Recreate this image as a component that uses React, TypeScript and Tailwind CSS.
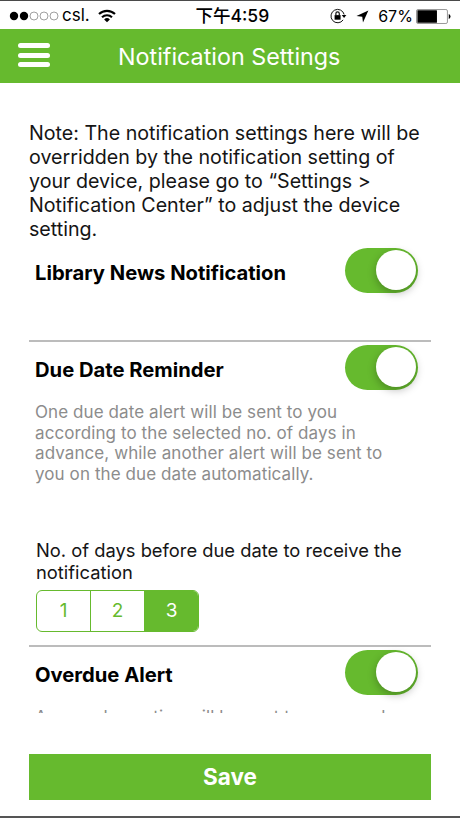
import { useState } from "react";

const NOTE = [
  "Note: The notification settings here will be",
  "overridden by the notification setting of",
  "your device, please go to “Settings >",
  "Notification Center” to adjust the device",
  "setting.",
];

const DUE_TEXT = [
  "One due date alert will be sent to you",
  "according to the selected no. of days in",
  "advance, while another alert will be sent to",
  "you on the due date automatically.",
];

function Lines({ lines }: { lines: string[] }) {
  return (
    <>
      {lines.map((line) => (
        <span key={line} className="block whitespace-nowrap">
          {line}
        </span>
      ))}
    </>
  );
}

function Toggle() {
  const [on, setOn] = useState(true);
  return (
    <button
      role="switch"
      aria-checked={on}
      onClick={() => setOn(!on)}
      className={`flex h-[45px] w-[73px] shrink-0 items-center rounded-full px-[2px] pb-px ${
        on ? "justify-end bg-[#66ba2e]" : "justify-start bg-gray-300"
      }`}
    >
      <span className="size-[40px] rounded-full bg-white shadow-[0_3px_8px_rgba(0,0,0,0.27)]" />
    </button>
  );
}

function SettingRow({ title }: { title: string }) {
  return (
    <div className="flex h-[45px] items-center justify-between pr-[13px] pl-[6px]">
      <h2 className="pt-[5px] text-[20.2px] leading-6 font-bold whitespace-nowrap text-black">{title}</h2>
      <Toggle />
    </div>
  );
}

function StatusBar() {
  return (
    <div className="flex h-[29px] shrink-0 items-center border-t border-[#4a4a4a] bg-white px-[9px] pt-[2px] text-[17px] text-black">
      <div className="flex w-[187px] items-center">
        <svg width="50" height="10" viewBox="0 0 50 10">
          <circle cx="5" cy="5" r="4.2" />
          <circle cx="15" cy="5" r="4.2" />
          <g fill="none" stroke="#777" strokeWidth="0.7">
            <circle cx="25" cy="5" r="4" />
            <circle cx="35" cy="5" r="4" />
            <circle cx="45" cy="5" r="4" />
          </g>
        </svg>
        <span className="ml-[3px] w-[36px]">csl.</span>
        <svg width="18" height="14" viewBox="0 0 18 14" fill="none" stroke="#000" strokeWidth="2.1">
          <path d="M1 5.1a11.5 11.5 0 0 1 16 0" />
          <path d="M4 8.3a7.2 7.2 0 0 1 10 0" />
          <path d="M9 13.2 6.1 10.4a4.2 4.2 0 0 1 5.8 0Z" fill="#000" stroke="none" />
        </svg>
      </div>
      <div className="w-[135px] text-[17.5px] font-medium whitespace-nowrap">下午4:59</div>
      <svg width="17" height="16" viewBox="0 0 17 16" fill="none" stroke="#111" strokeWidth="1">
        <path d="M13.2 11.9A6.7 6.7 0 1 1 14.2 6.5" />
        <path d="M11.8 6.9h4.6l-2.3 3Z" fill="#000" stroke="none" />
        <path d="M4.6 7.1h6v4.6h-6Z" fill="#000" stroke="none" />
        <path d="M5.9 7.2V5.5a1.7 1.7 0 0 1 3.4 0v1.7" strokeWidth="1.2" />
      </svg>
      <svg className="ml-[9px]" width="13" height="13" viewBox="0 0 13 13">
        <path d="M12.4.5 7 12.6 6.3 6.7.5 6Z" />
      </svg>
      <span className="ml-[9px] w-[38px] text-[16px] whitespace-nowrap">67%</span>
      <svg width="35" height="15" viewBox="0 0 35 15">
        <rect x=".5" y=".5" width="31" height="14" rx="1.5" fill="none" stroke="#999" />
        <rect x="1.4" y="1.3" width="19.6" height="12.4" rx=".5" />
        <path d="M32.8 5v5q1.8-.7 1.8-2.5T32.8 5Z" />
      </svg>
    </div>
  );
}

export default function App() {
  const [days, setDays] = useState(3);
  return (
    <div className="flex h-[818px] w-[460px] flex-col overflow-hidden border-b-2 border-[#555] bg-white font-['Inter','Noto_Sans_CJK_TC',sans-serif]">
      <StatusBar />
      <header className="flex h-[54px] shrink-0 items-center bg-[#66ba2e] pl-[18px] text-white">
        <button aria-label="Menu" className="flex w-[32px] flex-col gap-[4.5px] pb-[2px]">
          <span className="h-[5px] rounded-full bg-white" />
          <span className="h-[5px] rounded-full bg-white" />
          <span className="h-[5px] rounded-full bg-white" />
        </button>
        <h1 className="ml-[68px] pt-[2px] text-[23.3px] whitespace-nowrap">Notification Settings</h1>
      </header>

      <main className="mx-[29px] h-[630px] shrink-0 overflow-hidden pt-[38px]">
        <p className="text-[19.65px] leading-6 text-[#151515]">
          <Lines lines={NOTE} />
        </p>
        <div className="-mt-[2px] pt-[9px] pb-[47px]">
          <SettingRow title="Library News Notification" />
        </div>
        <section className="border-t-2 border-[#bcbcbc] pt-[3px]">
          <SettingRow title="Due Date Reminder" />
          <p className="mt-[12px] pl-[6px] text-[17px] leading-[20.5px] tracking-[0.09px] text-[#8c8c8c]">
            <Lines lines={DUE_TEXT} />
          </p>
          <p className="mt-[55px] pl-[7px] text-[18.35px] leading-[22px] text-[#151515]">
            <Lines lines={["No. of days before due date to receive the", "notification"]} />
          </p>
          <div className="mt-[7px] ml-[7px] flex h-[42px] w-[163px] overflow-hidden rounded-[6px] border-[1.5px] border-[#66ba2e] text-[19px]">
            {[1, 2, 3].map((n) => (
              <button
                key={n}
                onClick={() => setDays(n)}
                className={`flex-1 border-[#66ba2e] not-last:border-r ${
                  n === days ? "bg-[#66ba2e] text-white" : "text-[#66ba2e]"
                }`}
              >
                {n}
              </button>
            ))}
          </div>
        </section>
        <section className="mt-[13px] border-t-2 border-[#bcbcbc] pt-[3px]">
          <SettingRow title="Overdue Alert" />
          <p className="mt-[12px] pl-[6px] text-[17px] leading-[20.5px] tracking-[0.09px] whitespace-nowrap text-[#8c8c8c]">
            An overdue notice will be sent to you one day
          </p>
        </section>
      </main>

      <button className="mx-[29px] mt-[41px] h-[46px] shrink-0 bg-[#66ba2e] text-[22.5px] font-bold text-white">
        Save
      </button>
    </div>
  );
}
